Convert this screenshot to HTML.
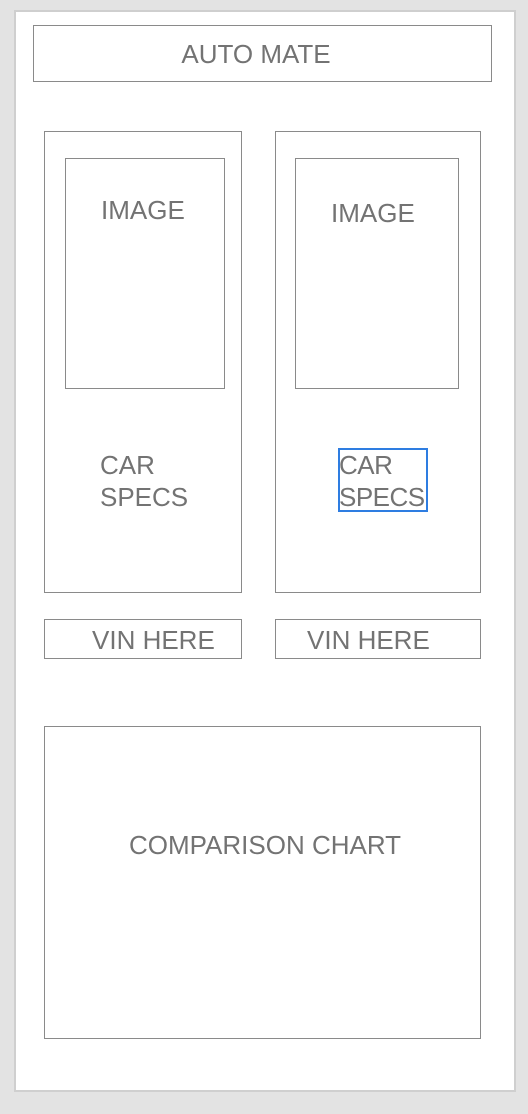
<!DOCTYPE html>
<html><head><style>
body{margin:0;width:528px;height:1114px;background:#e3e3e3;position:relative;overflow:hidden;font-family:"Liberation Sans",Arial,sans-serif;color:#737373;}
.b{position:absolute;box-sizing:border-box;border:1px solid #8a8a8a;background:#fff;}
.t{position:absolute;font-size:26px;line-height:32px;white-space:nowrap;}
</style></head><body>
<div style="position:absolute;left:14px;top:10px;width:502px;height:1082px;background:#fff;border:2px solid #cfcfcf;box-sizing:border-box"></div>
<div class="b" style="left:33px;top:25px;width:459px;height:57px"></div>
<div class="t" style="left:0;width:512px;text-align:center;top:38px">AUTO MATE</div>
<div class="b" style="left:44px;top:131px;width:198px;height:462px"></div>
<div class="b" style="left:65px;top:158px;width:160px;height:231px"></div>
<div class="t" style="left:101px;top:194px">IMAGE</div>
<div class="b" style="left:275px;top:131px;width:206px;height:462px"></div>
<div class="b" style="left:295px;top:158px;width:164px;height:231px"></div>
<div class="t" style="left:331px;top:197px">IMAGE</div>
<div class="t" style="left:100px;top:449px">CAR<br>SPECS</div>
<div style="position:absolute;left:338px;top:448px;width:90px;height:64px;border:2px solid #2e7de1;box-sizing:border-box"></div>
<div class="t" style="left:339px;top:449px;letter-spacing:-0.5px">CAR<br>SPECS</div>
<div class="b" style="left:44px;top:619px;width:198px;height:40px"></div>
<div class="t" style="left:92px;top:624px">VIN HERE</div>
<div class="b" style="left:275px;top:619px;width:206px;height:40px"></div>
<div class="t" style="left:307px;top:624px">VIN HERE</div>
<div class="b" style="left:44px;top:726px;width:437px;height:313px"></div>
<div class="t" style="left:44px;width:442px;text-align:center;top:829px">COMPARISON CHART</div>
</body></html>
